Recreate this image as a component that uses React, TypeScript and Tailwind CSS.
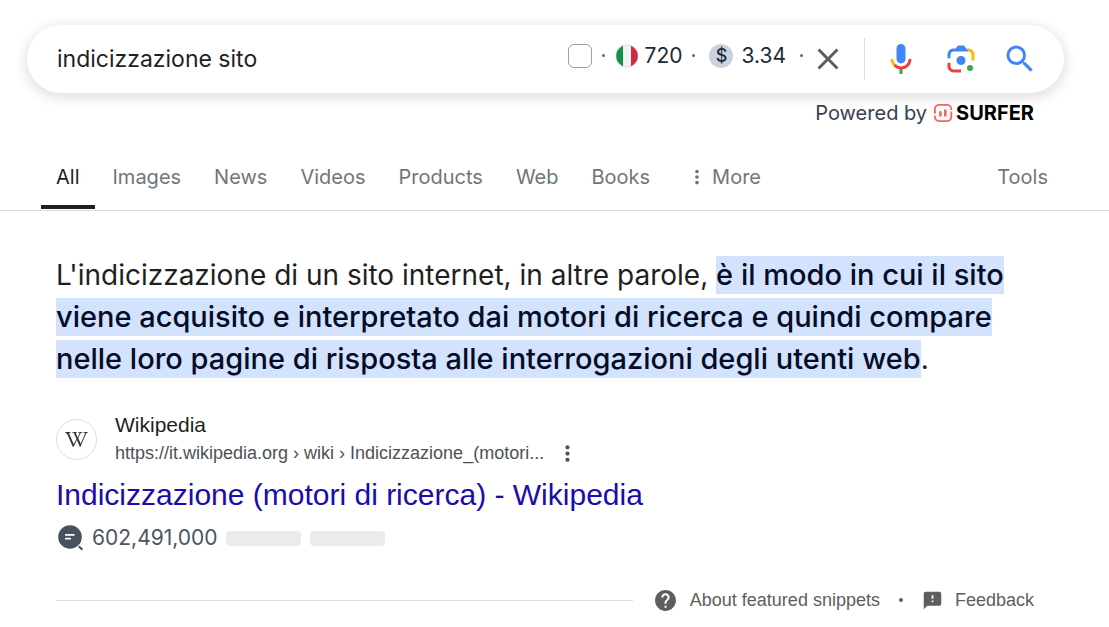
import React, { useState } from 'react';
import { FaWikipediaW } from 'react-icons/fa';
import { MdClose, MdFeedback, MdHelp, MdMoreVert, MdSearch } from 'react-icons/md';

const tabs = ['All', 'Images', 'News', 'Videos', 'Products', 'Web', 'Books'];

const MicIcon: React.FC = () => (
    <svg viewBox="0 0 24 24" className="size-9" aria-hidden="true">
        <path fill="#4285f4" d="M12 15c1.66 0 3-1.31 3-2.97V5.01C15 3.35 13.66 2 12 2S9 3.34 9 5.01v7.02C9 13.69 10.34 15 12 15z" />
        <path fill="#34a853" d="M11 18.08h2V22h-2z" />
        <path fill="#fbbc04" d="M7.05 16.87C5.78 15.54 5 14.04 5 12h2c0 1.45.56 2.42 1.47 3.38v.32l-1.15 1.18z" />
        <path fill="#ea4335" d="M12 16.93a4.97 5.25 0 0 1-3.54-1.55l-1.41 1.49C8.31 18.21 10.07 19 12 19c3.87 0 6.99-2.92 6.99-7H17c0 2.92-2.24 4.93-5 4.93z" />
    </svg>
);

const LensIcon: React.FC = () => (
    <svg viewBox="0 0 192 192" className="size-9" aria-hidden="true">
        <circle fill="#34a853" cx="144" cy="144" r="16" />
        <circle fill="#4285f4" cx="96" cy="104" r="24" />
        <path fill="#ea4335" d="M24 135.2c0 18.11 14.69 32.8 32.8 32.8H96v-16l-40.1-.1c-8.8 0-15.9-8.19-15.9-17.9v-18H24v19.2z" />
        <path fill="#fbbc04" d="M168 72.8c0-18.11-14.69-32.8-32.8-32.8H116l20 16c8.8 0 15.9 8.29 15.9 18v30h16V72.8z" />
        <path fill="#4285f4" d="M112 24H80L68 40H56.8C38.69 40 24 54.69 24 72.8V92h16V74c0-9.71 7.1-18 15.9-18h80.2L124 40l-12-16z" />
    </svg>
);

const ItalyFlag: React.FC = () => (
    <svg viewBox="0 0 24 24" className="size-6" aria-label="Italy">
        <clipPath id="flag">
            <circle cx="12" cy="12" r="11" />
        </clipPath>
        <g clipPath="url(#flag)">
            <path fill="#f3f3f3" d="M0 0h24v24H0z" />
            <path fill="#0f9246" d="M0 0h8v24H0z" />
            <path fill="#cf2b3d" d="M16 0h8v24h-8z" />
        </g>
        <circle cx="12" cy="12" r="11.2" fill="none" stroke="#c9ccd1" strokeWidth="0.6" />
    </svg>
);

const SurferIcon: React.FC = () => (
    <svg viewBox="0 0 20 20" className="size-5" fill="none" stroke="#f2665e" strokeWidth="1.8" aria-hidden="true">
        <path d="M1.9 12.4V14a4.2 4.2 0 0 0 4.2 4.2h8a4.2 4.2 0 0 0 4.2-4.2V8.6" />
        <path d="M18.3 7V6a4.2 4.2 0 0 0-4.2-4.2h-8A4.2 4.2 0 0 0 1.9 6v4.8" />
        <path d="M7.4 8.2v5.4M12.3 6.6v7" strokeWidth="2.6" />
    </svg>
);

const TrafficIcon: React.FC = () => (
    <svg viewBox="0 0 28 28" className="size-7" aria-hidden="true">
        <circle cx="14" cy="13" r="11.8" fill="#475160" />
        <path d="M9.8 10.9h8M9.8 14.7h4.4" stroke="#fff" strokeWidth="1.8" strokeLinecap="round" />
        <path d="M22.8 22.2l3.6 3.6" stroke="#475160" strokeWidth="2" />
    </svg>
);

const Dot: React.FC = () => <span className="size-[3px] rounded-full bg-[#5f6368]" />;

const App: React.FC = () => {
    const [query, setQuery] = useState('indicizzazione sito');
    const [activeTab, setActiveTab] = useState('All');

    return (
        <div className="bg-white pt-[25px] font-['Inter',sans-serif] text-[#1f1f1f]">
            {/* Search bar */}
            <header className="ml-[27px] mr-[45px]">
                <form
                    onSubmit={(e) => e.preventDefault()}
                    className="flex h-[68px] items-center rounded-full bg-white pl-[30px] pr-[26px] shadow-[0_3px_12px_2px_rgba(64,60,67,0.16)]"
                >
                    <input
                        type="text"
                        aria-label="Search"
                        value={query}
                        onChange={(e) => setQuery(e.target.value)}
                        className="min-w-0 flex-1 bg-transparent text-[23px] outline-none"
                    />
                    <div className="flex items-center pb-[7px] text-[21px] text-[#1f2937]">
                        <input
                            type="checkbox"
                            aria-label="Track keyword"
                            className="mr-[10px] size-6 appearance-none rounded-md border border-[#9a9da3] bg-white"
                        />
                        <Dot />
                        <span className="ml-[10px] mr-[6px]"><ItalyFlag /></span>
                        <span className="mr-[10px]">720</span>
                        <Dot />
                        <span className="ml-[14px] mr-2 flex size-6 items-center justify-center rounded-full bg-[#cbd3e0] text-lg font-medium">$</span>
                        <span className="mr-[14px]">3.34</span>
                        <Dot />
                    </div>
                    <button type="button" aria-label="Clear" onClick={() => setQuery('')} className="ml-[7px] text-[#5e5e5e]">
                        <MdClose size={36} />
                    </button>
                    <span className="mx-[18px] h-[42px] w-px bg-[#dadce0]" />
                    <div className="flex items-center gap-6">
                        <button type="button" aria-label="Search by voice"><MicIcon /></button>
                        <button type="button" aria-label="Search by image"><LensIcon /></button>
                        <button type="submit" aria-label="Search" className="-ml-px text-[#4285f4]"><MdSearch size={36} /></button>
                    </div>
                </form>
                <div className="mr-[30px] mt-[6px] flex h-7 items-center justify-end text-xl text-[#374151]">
                    Powered by
                    <span className="ml-[6px] mr-[3px]"><SurferIcon /></span>
                    <span className="font-bold text-black">SURFER</span>
                </div>
            </header>

            {/* Result type tabs */}
            <nav className="mt-[18px] flex h-[66px] items-stretch gap-[3px] border-b border-[#dadce0] pl-[41px] pr-[61px] text-xl text-[#70757a]">
                {tabs.map((tab) => (
                    <button
                        key={tab}
                        type="button"
                        onClick={() => setActiveTab(tab)}
                        className={`mb-px border-b-4 px-[15px] pt-1 ${tab === activeTab ? 'border-[#1f1f1f] text-[#1f1f1f]' : 'border-transparent'}`}
                    >
                        {tab}
                    </button>
                ))}
                <button type="button" className="mb-px ml-[18px] flex items-center gap-1">
                    <MdMoreVert size={22} />
                    More
                </button>
                <button type="button" className="mb-px ml-auto">Tools</button>
            </nav>

            <main className="pl-14 pr-[75px]">
                {/* Featured snippet */}
                <p className="mt-[43px] text-[28px] leading-[42px]">
                    L'indicizzazione di un sito internet, in altre parole,{' '}
                    <b className="box-decoration-clone bg-[#d3e3fd] pb-0.5 pt-px text-[29px] font-medium text-[#040c28]">
                        è il modo in cui il sito viene acquisito e interpretato dai motori di ricerca e quindi compare nelle
                        loro pagine di risposta alle interrogazioni degli utenti web
                    </b>
                    .
                </p>

                {/* Source */}
                <div className="mt-[31px] flex items-center font-['Liberation_Sans',Arial,sans-serif]">
                    <span className="mr-[18px] flex size-[41px] items-center justify-center rounded-full border border-[#dadce0] text-[#333]">
                        <FaWikipediaW size={23} />
                    </span>
                    <div>
                        <div className="text-[21px] leading-7">Wikipedia</div>
                        <div className="flex items-center text-lg leading-7 text-[#4d5156]">
                            <cite className="not-italic">https://it.wikipedia.org › wiki › Indicizzazione_(motori...</cite>
                            <button type="button" aria-label="About this result" className="ml-[11px]">
                                <MdMoreVert size={25} />
                            </button>
                        </div>
                    </div>
                </div>
                <h3 className="mt-[8px] font-['Liberation_Sans',Arial,sans-serif] text-[30px] leading-[40px] text-[#1a0dab]">
                    <a href="#result">Indicizzazione (motori di ricerca) - Wikipedia</a>
                </h3>
                <div className="mt-[9px] flex h-7 items-center text-[21px] text-[#4b5563]">
                    <TrafficIcon />
                    <span className="mx-2">602,491,000</span>
                    <span className="mr-[9px] h-[15px] w-[75px] rounded bg-[#e9ebed]" />
                    <span className="h-[15px] w-[75px] rounded bg-[#e9ebed]" />
                </div>

                {/* Snippet footer */}
                <div className="mt-[34px] flex h-7 items-center font-['Liberation_Sans',Arial,sans-serif] text-lg text-[#5e5e5e]">
                    <span className="mr-5 h-px flex-1 bg-[#dadce0]" />
                    <a href="#about" className="flex items-center">
                        <MdHelp size={25} className="mr-3" />
                        About featured snippets
                    </a>
                    <span className="mx-[19px] size-1 rounded-full bg-[#5e5e5e]" />
                    <a href="#feedback" className="flex items-center">
                        <MdFeedback size={21} className="mr-3" />
                        Feedback
                    </a>
                </div>
            </main>
        </div>
    );
};

export default App;
